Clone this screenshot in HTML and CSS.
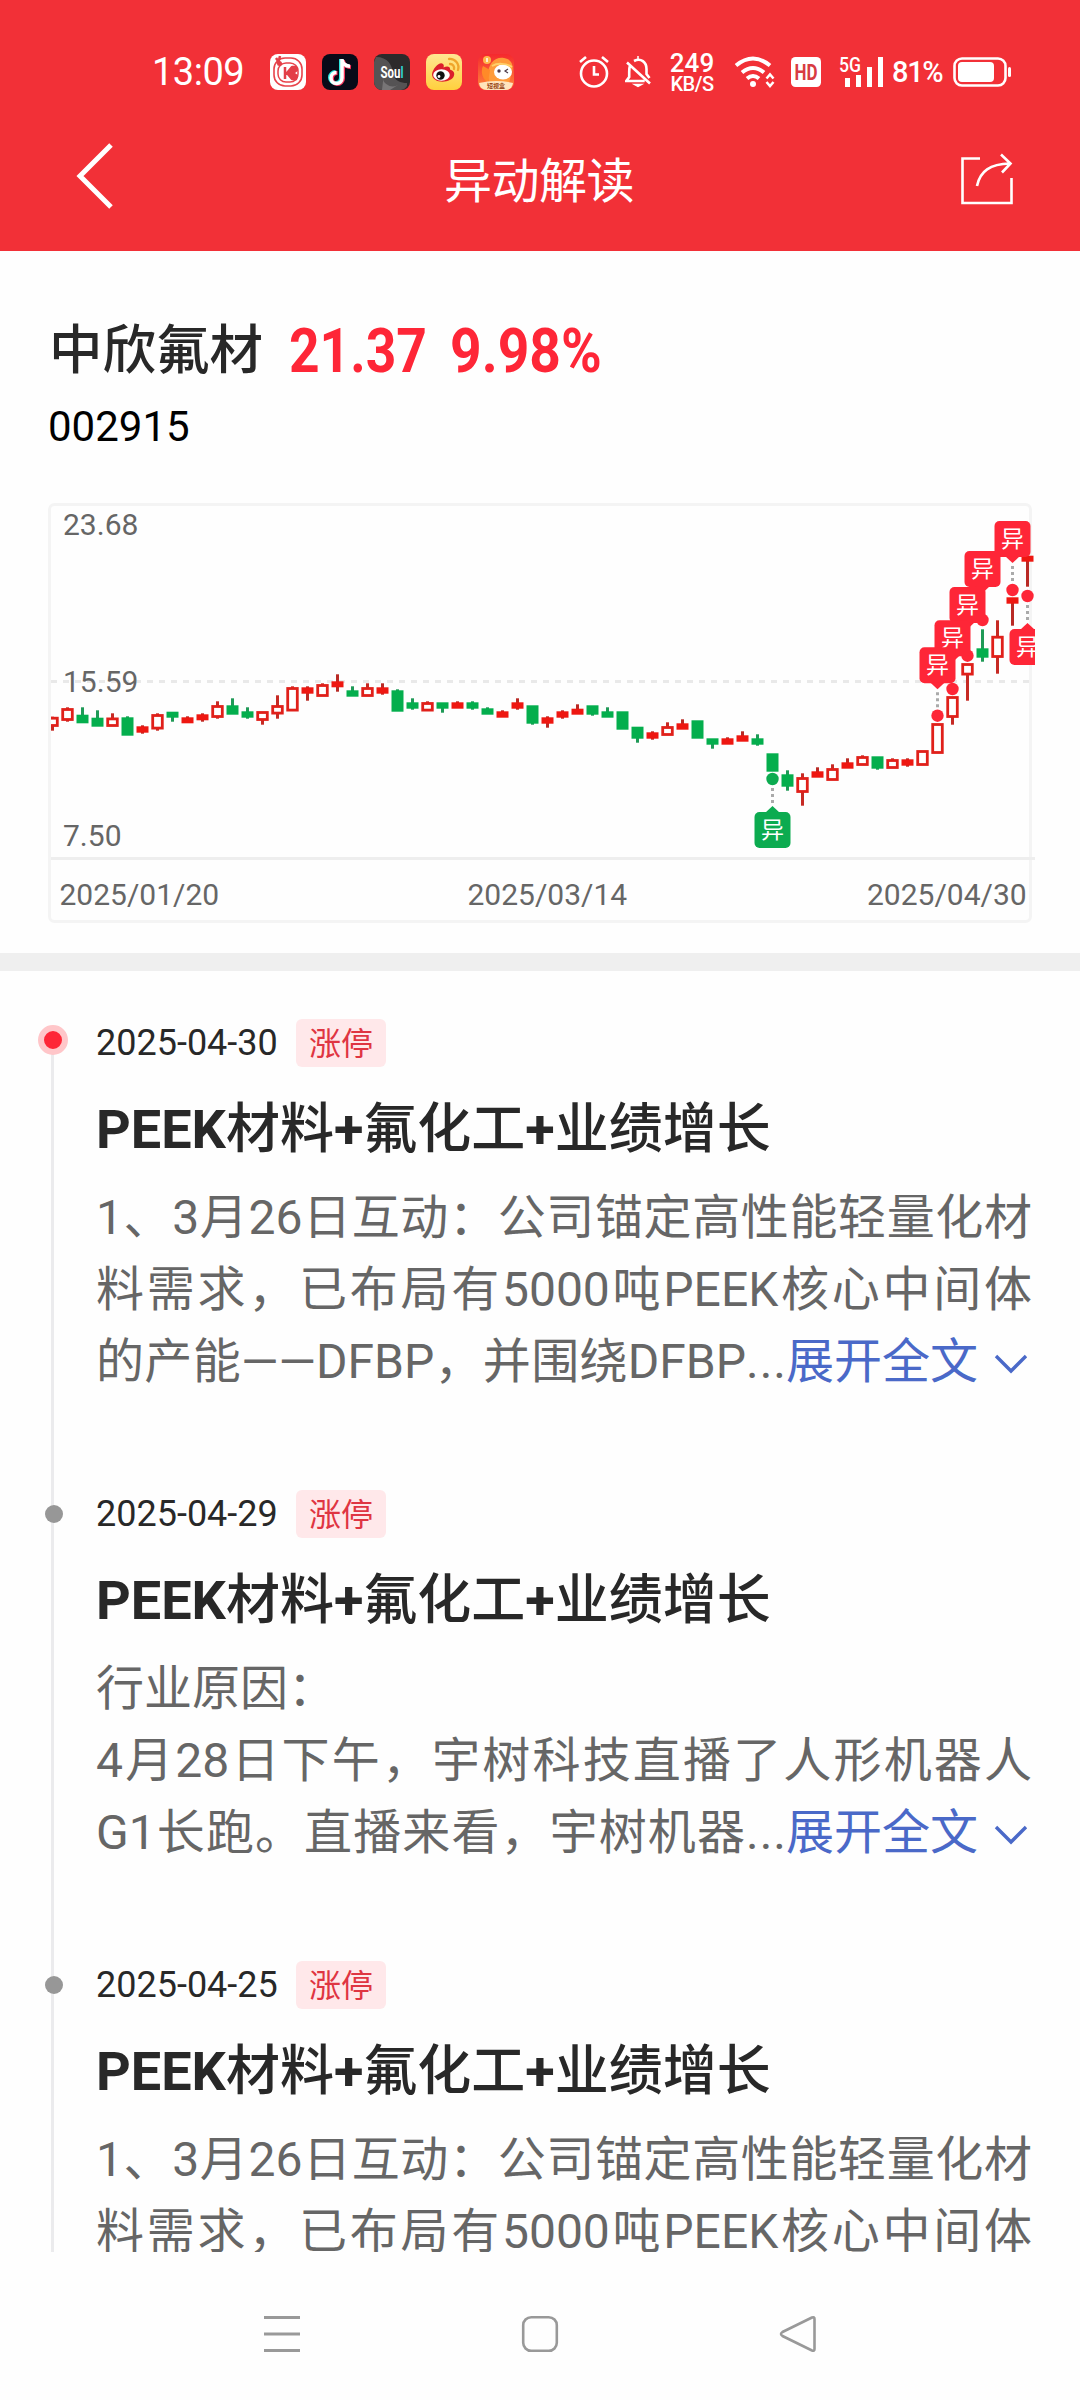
FILE: index.html
```html
<!DOCTYPE html>
<html lang="zh-CN">
<head>
<meta charset="utf-8">
<title>异动解读</title>
<link rel="stylesheet" href="styles.css">
</head>
<body>
<div class="screen">
  <header class="top">
    <div class="status">
      <span class="clock">13:09</span>
      <div class="apps">
        <svg class="app" viewBox="0 0 36 36"><rect width="36" height="36" rx="8" fill="#fff"/><rect x="4" y="4" width="28" height="28" rx="11" fill="none" stroke="#e8434b" stroke-width="1.600"/><rect x="8" y="9" width="20" height="19" rx="8" fill="none" stroke="#e8434b" stroke-width="1.500"/><path d="M15 13v12M17 19l5-6 4 0 1 3-4 3 4 3-1 3h-4z" fill="#e33f48" stroke="#e33f48" stroke-width="2.500" stroke-linejoin="round"/><path d="M6 4l5 7M10 2l-2 8" stroke="#e33f48" stroke-width="2.500"/><circle cx="9.500" cy="9.500" r="2.500" fill="#e33f48"/></svg>
        <svg class="app" viewBox="0 0 36 36"><rect width="36" height="36" rx="8" fill="#080a18"/><g fill="none" stroke-width="4"><path d="M19 5v18.500a5.500 5.500 0 1 1-5.500-5.500M19 6c1 4 3.500 6 8 6.300" stroke="#2ee6e0"/><path d="M21 6v18.500a5.500 5.500 0 1 1-5.500-5.500M21 7c1 4 3.500 6 8 6.300" stroke="#f5345c"/><path d="M20 5v19a5.500 5.500 0 1 1-5.500-5.500M20 6c1 4 3.500 6 8 6.300" stroke="#fff" stroke-width="3.500"/></g></svg>
        <svg class="app" viewBox="0 0 36 36"><rect width="36" height="36" rx="8" fill="#2c2a2b"/><path d="M2 3c12 0 16 8 17 16s8 10 14 10v3a8 8 0 0 1-6 4H8a8 8 0 0 1-8-8V8z" fill="#555354"/><path d="M10 19a10 9 0 0 0 14 12l-8 5H8z" fill="#777576"/><text x="6.500" y="24" class="soul" textLength="23" lengthAdjust="spacingAndGlyphs">Sou<tspan fill="#2fd5cd">l</tspan></text></svg>
        <svg class="app" viewBox="0 0 36 36"><defs><linearGradient id="wb" x1="0" y1="0" x2="0" y2="1"><stop offset="0" stop-color="#ffe792"/><stop offset="1" stop-color="#ffd03d"/></linearGradient></defs><rect width="36" height="36" rx="8" fill="url(#wb)"/><path d="M6 20c1-6 8-13 11-10 1 1 1 2 .5 3.500 3-1.500 7-1.500 6.500 2 3 1 5 3 4 6-2 8-22 9-22-1.500z" fill="#dc1f2c"/><ellipse cx="15.500" cy="21" rx="8.300" ry="5.800" fill="#fff"/><circle cx="14.500" cy="21.500" r="4.200" fill="#111"/><circle cx="13" cy="22.500" r="1.400" fill="#fff"/><path d="M23 5a8.500 8.500 0 0 1 9 11M24 10a4 4 0 0 1 4 5" fill="none" stroke="#f0a52a" stroke-width="2.300" stroke-linecap="round"/></svg>
        <svg class="app" viewBox="0 0 36 36"><defs><linearGradient id="st" x1="0" y1="0" x2="0" y2="1"><stop offset="0" stop-color="#f5282e"/><stop offset="1" stop-color="#ff8a3a"/></linearGradient></defs><rect width="36" height="36" rx="8" fill="url(#st)"/><path d="M11 28C7 14 15 2 26 4c8 1 10 9 8 14l-3 11z" fill="#ff9b3a"/><path d="M5 12c-3 6 0 14 5 16l2-12z" fill="#ff8a28"/><ellipse cx="25" cy="18" rx="9" ry="7.500" fill="#fff"/><path d="M14 12c5-3 14-3 20 1" stroke="#ffd06a" stroke-width="2" fill="none"/><circle cx="21" cy="17" r="1.700" fill="#4c3a48"/><path d="M30 15l-3 2 3 2" fill="none" stroke="#4c3a48" stroke-width="1.200"/><circle cx="9" cy="6" r="4" fill="#ffb64c"/><path d="M9 4v4" stroke="#fff" stroke-width="1.500"/><path d="M1 29q17-4 34 0-1 7-8 7H9q-7 0-8-7z" fill="#ffe4bd"/><text x="9" y="34" class="mini">短视盒</text></svg>
      </div>
      <svg class="ic-alarm" viewBox="0 0 30 32" fill="none" stroke="#fff" stroke-width="2.600"><circle cx="15" cy="17.500" r="13"/><path d="M15 10v8.500h5M1 6l6-5M29 6l-6-5"/></svg>
      <svg class="ic-bell" viewBox="0 0 26 32" fill="none" stroke="#fff" stroke-width="2.600"><path d="M9 5c7-3.500 12.500 1 12.500 8v5l3 4M5 9.500c-.8 2-.8 4-.8 6.500v5l-3 4h18.500M2 6.500l23 21"/><path d="M13 0v4M9.500 28.500h7l-3.500 2z" fill="#fff" stroke-width="1.500"/></svg>
      <div class="speed"><b>249</b><i>KB/S</i></div>
      <svg class="ic-wifi" viewBox="0 0 42 32" fill="none" stroke="#fff" stroke-width="4"><path d="M2 9.500q17-14 34 0M8 16.500q11-9 22 0M13 22.500q6-5 12 0"/><circle cx="19" cy="28" r="3" fill="#fff" stroke="none"/><path d="M32.500 22.500l3.500-4 3.500 4M32.500 26l3.500 4 3.500-4" stroke-width="2.500"/></svg>
      <svg class="ic-hd" viewBox="0 0 30 30"><rect width="30" height="30" rx="4.500" fill="#fff"/><text x="3.500" y="22.800" class="hd" textLength="23" lengthAdjust="spacingAndGlyphs">HD</text></svg>
      <svg class="ic-signal" viewBox="0 0 46 31"><text x="0" y="15" class="g5" textLength="22" lengthAdjust="spacingAndGlyphs">5G</text><path d="M6 21h5v9h-5zM17 18h5v12h-5zM28 10h5v20h-5zM39 0h5v30h-5z" fill="#fff"/></svg>
      <span class="percent">81%</span>
      <svg class="ic-battery" viewBox="0 0 58 30"><rect x="1.500" y="1.500" width="51" height="27" rx="7.500" fill="none" stroke="#fff" stroke-width="2.600"/><rect x="5" y="5" width="36" height="20" rx="4" fill="#fff"/><rect x="55" y="10" width="3" height="10" rx="1.500" fill="#fff"/></svg>
    </div>
    <div class="bar">
      <svg class="back" viewBox="0 0 40 68"><path d="M36 3L5 34l31 31" fill="none" stroke="#fff" stroke-width="5"/></svg>
      <h1 class="page-title">异动解读</h1>
      <svg class="share" viewBox="0 0 54 54" fill="none" stroke="#fff" stroke-width="2.600"><path d="M20 5.500H2.500V50h49V25"/><path d="M17 33C20 18 30 11 50 10.500M41 1.500l9.500 9L42 19.500"/></svg>
    </div>
  </header>

  <section class="stock">
    <div class="quote"><h2 class="name">中欣氟材</h2><span class="price"><span>21.37</span></span><span class="change"><span>9.98%</span></span></div>
    <div class="code">002915</div>
    <svg class="chart" id="chart" viewBox="48 503 988 421"></svg>
  </section>

  <main class="feed">
    <article class="entry latest">
      <div class="rail"><i class="dot"></i></div>
      <div class="meta"><time>2025-04-30</time><span class="tag">涨停</span></div>
      <h3 class="headline"><b>PEEK</b>材料<b>+</b>氟化工<b>+</b>业绩增长</h3>
      <div class="body">
        <span class="line">1、3月26日互动：公司锚定高性能轻量化材</span>
        <span class="line">料需求，已布局有5000吨PEEK核心中间体</span>
        <div class="last"><span class="line cut">的产能——DFBP，并围绕DFBP<em>...</em></span><a class="more">展开全文<svg viewBox="0 0 34 20"><path d="M2 2l15 15L32 2" fill="none" stroke="#4a69c8" stroke-width="3.400"/></svg></a></div>
      </div>
    </article>
    <article class="entry">
      <div class="rail"><i class="dot"></i></div>
      <div class="meta"><time>2025-04-29</time><span class="tag">涨停</span></div>
      <h3 class="headline"><b>PEEK</b>材料<b>+</b>氟化工<b>+</b>业绩增长</h3>
      <div class="body">
        <span class="line short">行业原因：</span>
        <span class="line">4月28日下午，宇树科技直播了人形机器人</span>
        <div class="last"><span class="line cut">G1长跑。直播来看，宇树机器<em>...</em></span><a class="more">展开全文<svg viewBox="0 0 34 20"><path d="M2 2l15 15L32 2" fill="none" stroke="#4a69c8" stroke-width="3.400"/></svg></a></div>
      </div>
    </article>
    <article class="entry">
      <div class="rail"><i class="dot"></i></div>
      <div class="meta"><time>2025-04-25</time><span class="tag">涨停</span></div>
      <h3 class="headline"><b>PEEK</b>材料<b>+</b>氟化工<b>+</b>业绩增长</h3>
      <div class="body">
        <span class="line">1、3月26日互动：公司锚定高性能轻量化材</span>
        <span class="line">料需求，已布局有5000吨PEEK核心中间体</span>
      </div>
    </article>
  </main>

  <nav class="sysnav">
    <svg viewBox="0 0 38 38" stroke="#999"><path d="M1 2.500h36M1 19h36M1 35.500h36" stroke-width="3"/></svg>
    <svg viewBox="0 0 38 38" stroke="#999"><rect x="2.200" y="2.200" width="33.600" height="33.600" rx="8" fill="none" stroke-width="2.600"/></svg>
    <svg viewBox="0 0 38 38" stroke="#999"><path d="M33 2.500 3.500 17q-3 2 0 4L33 35.500q2.500 1 2.500-1.500V4q0-2.500-2.500-1.500z" fill="none" stroke-width="2.600"/></svg>
  </nav>
</div>
<script src="chart.js"></script>
</body>
</html>
```
FILE: styles.css
```css
* { box-sizing: border-box; margin: 0; padding: 0; }
body { background: #fdfdfd; font-family: Roboto, "Noto Sans CJK SC", sans-serif; color: #282828; }
svg { display: block; flex: none; }
i, em { font-style: normal; }
.screen { width: 1080px; height: 2400px; display: flex; flex-direction: column; overflow: hidden; background: #fefefe; }

.top { height: 251px; background: #f23037; color: #fff; flex: none; }
.status { height: 106px; padding: 38px 0 0 152px; display: flex; align-items: center; }
.clock { width: 118px; font-size: 38px; line-height: 44px; letter-spacing: -0.5px; }
.apps { display: flex; gap: 16px; margin-right: 65px; }
.app { width: 36px; height: 36px; }
.soul { font: 700 16px Roboto, sans-serif; fill: #fff; }
.mini { font: 700 6px "Noto Sans CJK SC", sans-serif; fill: #9a4a18; }
.ic-alarm { width: 30px; height: 32px; margin-right: 16px; }
.ic-bell { width: 26px; height: 32px; margin-right: 18px; }
.speed { width: 46px; height: 44px; display: flex; flex-direction: column; align-items: center; font-weight: 500; padding-top: 2px; }
.speed b { font-size: 26px; line-height: 22px; font-weight: 500; }
.speed i { font-size: 20px; line-height: 20px; letter-spacing: -0.5px; }
.ic-wifi { width: 42px; height: 32px; margin-left: 19px; margin-right: 15px; }
.ic-hd { width: 30px; height: 30px; margin-right: 18px; }
.hd { font: 700 22px Roboto, sans-serif; fill: #d83b42; }
.g5 { font: 500 20px Roboto, sans-serif; fill: #fff; }
.ic-signal { width: 46px; height: 31px; margin-right: 7px; }
.percent { width: 61px; font-size: 29px; font-weight: 500; line-height: 30px; letter-spacing: -1.3px; }
.ic-battery { width: 58px; height: 30px; }
.bar { height: 145px; padding: 0 66px 6px 75px; display: flex; align-items: center; justify-content: space-between; }
.back { width: 40px; height: 68px; }
.page-title { font-size: 48px; font-weight: 400; line-height: 60px; padding-top: 12px; margin-left: 3px; letter-spacing: -0.5px; }
.share { width: 54px; height: 54px; margin-top: 8px; }

.stock { height: 720px; flex: none; padding: 67px 44px 0 48px; border-bottom: 18px solid #efefef; }
.quote { height: 66px; display: flex; align-items: center; padding-left: 1px; }
.name { width: 240px; font-size: 53.500px; font-weight: 500; line-height: 66px; white-space: nowrap; }
.price, .change { font-size: 62px; font-weight: 700; line-height: 66px; color: #fe2637; }
.price span, .change span { display: inline-block; transform-origin: 0 50%; transform: scaleX(.86); }
.change span { transform: scaleX(.89); }
.price { width: 161px; }
.code { height: 60px; margin-top: 13px; font-size: 42px; line-height: 60px; color: #000; }
.chart { width: 988px; height: 421px; margin-top: 46px; }
.chart-label { font: 400 30px Roboto, sans-serif; fill: #666; }
.flag-text { font: 400 23px "Noto Sans CJK SC", sans-serif; fill: #fff; text-anchor: middle; }

.feed { height: 1281px; flex: none; overflow: hidden; padding: 48px 48px 0 51px; }
.entry { position: relative; height: 471px; padding-left: 45px; }
.rail { position: absolute; left: 0; top: -48px; width: 3px; height: 471px; background: #ebebed; }
.latest .rail { top: 25px; height: 400px; }
.dot { position: absolute; left: -6px; top: 63px; width: 18px; height: 18px; border-radius: 50%; background: #979797; }
.latest .dot { left: -13px; top: -19px; width: 30px; height: 30px; border: 6px solid #ffc6c9; background: #fe2637; }
.meta { display: flex; align-items: center; height: 48px; }
time { width: 200px; font-size: 36px; line-height: 48px; }
.tag { width: 90px; height: 48px; border-radius: 6px; background: #ffe8ea; color: #df3542; font-size: 32px; line-height: 51px; text-align: center; }
.headline { margin-top: 22px; height: 82px; font-size: 54px; line-height: 82px; font-weight: 500; white-space: nowrap; }
.headline b { font-weight: 700; }
.body { margin-top: 11px; font-size: 48px; line-height: 72px; color: #666; width: 936px; }
.line { display: block; height: 72px; text-align: justify; text-align-last: justify; }
.short { text-align-last: left; }
.last { display: flex; }
.cut { width: 691px; }
.cut em { letter-spacing: 1px; }
.more { display: flex; align-items: center; color: #4a69c8; white-space: nowrap; margin-left: -1px; }
.more svg { width: 34px; height: 20px; margin: 4px 0 0 16px; }

.sysnav { height: 148px; padding: 63px 263px 0; display: flex; justify-content: space-between; background: #fefefe; }
.sysnav svg { width: 38px; height: 38px; }
```
FILE: chart.js
```js
// Candles: [kind, high, bodyTop, bodyBottom, low]; H = hollow, F = filled, G = falling.
const candles = [
["H",716.7,717,726.7,730.7],["H",707.3,708.3,720.7,721.7],["G",707.3,714.7,723.3,0],["G",710.3,717.7,726.7,0],["H",713.3,717.7,726.7,0],
["G",716.3,717.3,735.7,0],["F",725.3,726.3,732.7,733.7],["H",713.3,714.3,729.3,730.7],["G",0,711.7,717.7,721.7],["F",716.3,717.3,723.3,0],
["F",713.3,714.3,720.3,721.7],["H",701.3,705.3,717.7,718.7],["G",698.3,705.3,714.7,0],["G",707.3,711.3,717.7,718.7],["H",0,711.3,720.7,724.7],
["H",695.3,705.3,714.3,718.7],["H",686.3,687.3,711.3,0],["F",686.3,687.3,693.7,700.7],["H",683.3,684.3,696.7,0],["F",674.3,681.3,687.3,691.7],
["G",686.3,690.3,696.7,0],["H",683.3,687.3,696.7,0],["F",683.3,687.3,693.7,694.7],["G",689.3,690.3,711.7,0],["G",698.3,702.3,708.7,709.7],
["H",701.3,702.3,711.3,0],["G",0,702.3,708.7,712.7],["F",701.3,702.3,708.7,0],["G",701.3,702.3,708.7,709.7],["G",707.3,708.3,714.7,0],
["F",710.3,711.3,717.7,0],["F",698.3,702.3,708.7,709.7],["G",0,705.3,723.7,724.7],["F",716.3,717.3,723.7,727.7],["F",710.3,711.3,717.7,718.7],
["F",704.3,708.7,714.7,0],["G",0,705.3,714.7,715.7],["G",707.3,711.3,717.7,0],["G",0,711.3,729.7,0],["G",0,726.7,738.7,742.7],
["F",731.3,732.3,738.7,739.7],["H",722.3,726.3,735.7,0],["F",719.3,723.3,729.7,0],["G",0,720.3,738.7,0],["G",0,738.3,744.7,748.7],
["F",737.3,738.3,744.7,0],["F",731.3,735.3,741.7,0],["G",734.3,738.3,744.7,745.7],["G",0,753.3,771.7,0],["G",770.3,774.3,786.7,790.7],
["H",773.3,777.3,792.7,805.7],["F",767.3,771.3,777.7,0],["H",764.3,768.3,780.7,0],["F",758.3,762.3,768.7,0],["H",755.3,756.3,765.7,0],
["G",0,756.3,768.7,769.7],["H",758.3,759.3,768.7,0],["F",758.3,759.3,765.7,766.7],["H",0,750.3,765.7,0],["H",0,723.3,753.7,0],
["H",0,696.3,717.7,724.7],["H",0,663.3,675.3,700.7],["G",629.3,648.3,657.7,661.7],["H",620.3,636,657.7,673.7],["F",0,597.3,603.7,625.7],["F",0,555.7,561.7,586.7]
];
// Flags: [candle index, dot y, box top, direction of the pointer]
const flags = [[48,779,812,"up"],[59,715.7,647.3,"down"],[60,689,620.3,"down"],[61,655.7,587,"down"],[62,620,551,"down"],[64,590,521,"down"],[65,596,629,"up"]];
const cx = i => 52.5 + 15 * i;
let s = `<defs><clipPath id="plot"><rect x="51" y="506" width="984" height="354"/></clipPath></defs>
<rect x="49.500" y="504.500" width="981" height="417" rx="5" fill="none" stroke="#f4f4f4" stroke-width="3"/>
<path d="M51 681.500H1030" stroke="#e9e9e9" stroke-width="3" stroke-dasharray="6 6"/>
<path d="M51 858.500H1035" stroke="#eee" stroke-width="3"/><g clip-path="url(#plot)">`;
candles.forEach(([kind, high, top, bottom, low], i) => {
  const x = cx(i), wick = kind === "G" ? "#1f9a57" : kind === "F" ? "#b92a25" : "#c62a24";
  if (high) s += `<path d="M${x} ${high}V${top + 1}" stroke="${wick}" stroke-width="3"/>`;
  if (low) s += `<path d="M${x} ${bottom - 1}V${low}" stroke="${wick}" stroke-width="3"/>`;
  if (kind === "H") s += `<rect x="${x - 4.8}" y="${top + 1.2}" width="9.6" height="${bottom - top - 2.4}" fill="#fff" stroke="#e0201a" stroke-width="2.800"/>`;
  else s += `<rect x="${x - 6}" y="${top}" width="12" height="${bottom - top}" fill="${kind === "G" ? "#04ae4d" : "#ee1711"}"/>`;
});
// Connectors lie under every flag box
let boxes = "";
flags.forEach(([i, dot, top, dir]) => {
  const x = cx(i), color = i === 48 ? "#0cab50" : "#fe2637", up = dir === "up";
  const tip = up ? top - 6 : top + 42, y1 = up ? dot + 9 : tip + 3, y2 = up ? tip - 2 : dot - 8;
  s += `<path d="M${x} ${y1}V${y2}" stroke="#aaa" stroke-width="3" stroke-dasharray="3 3"/>`;
  boxes = `<circle cx="${x}" cy="${dot}" r="6.200" fill="${color}"/><rect x="${x - 18}" y="${top}" width="36" height="36" rx="5" fill="${color}"/>`
    + (up ? `<path d="M${x - 7} ${top + .5}L${x} ${tip}l7 6.500z" fill="${color}"/>` : `<path d="M${x - 7} ${top + 35.5}L${x} ${tip}l7-6.500z" fill="${color}"/>`)
    + `<text class="flag-text" x="${x}" y="${top + 25.5}">异</text>` + boxes;
});
s += boxes + `</g><g class="chart-label"><text x="63" y="535">23.68</text><text x="63" y="691.500">15.59</text><text x="63" y="846">7.50</text>
<text x="59.500" y="904.500">2025/01/20</text><text x="467.500" y="904.500">2025/03/14</text><text x="867" y="904.500">2025/04/30</text></g>`;
document.getElementById("chart").innerHTML = s;
```
